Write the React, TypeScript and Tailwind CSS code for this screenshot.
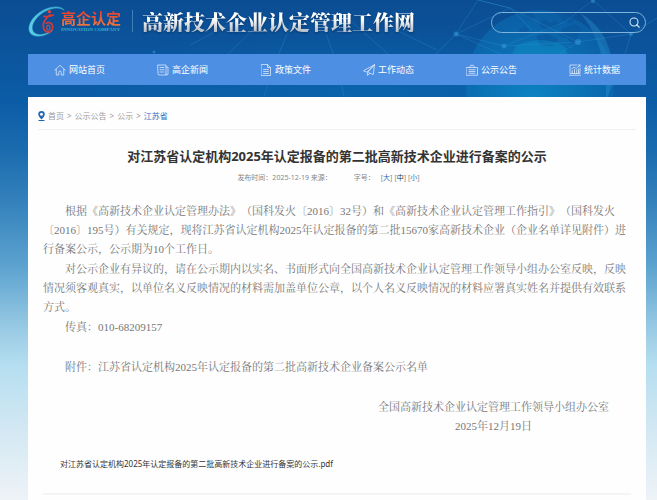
import type { ReactNode } from "react"

const Icon = ({ children }: { children: ReactNode }) => (
  <svg
    className="h-3 w-3 shrink-0 opacity-80"
    viewBox="0 0 24 24"
    fill="none"
    stroke="currentColor"
    strokeWidth="1.6"
    strokeLinecap="round"
    strokeLinejoin="round"
    aria-hidden="true"
  >
    {children}
  </svg>
)

const HomeIcon = () => (
  <Icon>
    <path d="M1.500 12.500 12 2.500l10.500 10M4.500 10.500V22h5v-5.500a2.500 2.500 0 0 1 5 0V22h5V10.500" />
  </Icon>
)

const NewsIcon = () => (
  <Icon>
    <path d="M2 2h16v20H4a2 2 0 0 1-2-2zM18 6h4v14a2 2 0 0 1-4 0M6 7h8M6 11.500h8M6 16h8" />
  </Icon>
)

const PolicyIcon = () => (
  <Icon>
    <path d="M3 1h12l6 6v16H3zM15 1v6h6M7 11h10M7 15h10M7 19h10" />
  </Icon>
)

const PlaneIcon = () => (
  <Icon>
    <path d="M23 1.500 1 13.500l6 2.500zM23 1.500 9 17v6l4-4M23 1.500 20.500 21 11 17.500" />
  </Icon>
)

const NoticeIcon = () => (
  <Icon>
    <path d="M1 7h22v15.500H1zM7 7l2.500-4.500h5L17 7M6 11.500h12M6 15h12M6 18.500h12" />
  </Icon>
)

const StatsIcon = () => (
  <Icon>
    <path d="M15 2H2v17h20V9M1 22.500h22M6.500 19v-6M11 19v-8M15.500 19v-7M19 19v-9M5.500 9.500l5-3 4 2.500L22 2M18 2h4v4" />
  </Icon>
)

const navItems = [
  { label: "网站首页", icon: <HomeIcon /> },
  { label: "高企新闻", icon: <NewsIcon /> },
  { label: "政策文件", icon: <PolicyIcon /> },
  { label: "工作动态", icon: <PlaneIcon /> },
  { label: "公示公告", icon: <NoticeIcon /> },
  { label: "统计数据", icon: <StatsIcon /> },
]

const crumbs = ["首页", "公示公告", "公示"]

const Backdrop = () => (
  <svg
    className="absolute inset-x-0 top-0 h-[100px] w-full"
    viewBox="0 0 657 100"
    preserveAspectRatio="xMidYMin slice"
    fill="none"
    aria-hidden="true"
  >
    <defs>
      <radialGradient id="globe" cx="0.45" cy="0.6" r="0.6">
        <stop offset="0" stopColor="#0c86c4" stopOpacity="0.9" />
        <stop offset="0.55" stopColor="#0b78ba" stopOpacity="0.75" />
        <stop offset="1" stopColor="#0b6ab0" stopOpacity="0.55" />
      </radialGradient>
      <radialGradient id="glow" cx="0.5" cy="0.9" r="0.6">
        <stop offset="0" stopColor="#0a6cb3" stopOpacity="0.5" />
        <stop offset="1" stopColor="#0a6cb3" stopOpacity="0" />
      </radialGradient>
    </defs>
    <rect x="80" width="577" height="100" fill="url(#glow)" />
    <circle cx="540" cy="84" r="74" fill="url(#globe)" />
    <path
      d="M580 13c24 14 34 36 33 69l-7 20c1-35-6-66-26-89z"
      fill="#2a9ad5"
      fillOpacity="0.35"
    />
    <g fill="#0a559b" fillOpacity="0.6">
      <path d="M523 15l8-3 5 5-6 3zM539 22l7-3 4 4 6-3 4 4-5 4-8 2-7-3zM552 12l16-1 9 6-7 6-8-2-3-6zM562 29l13-5 7 5-5 7 3 7-8 1-5-6-8-2zM536 36l12-2 10 5-5 8-13-2zM518 30l7-4 4 4-6 4z" />
    </g>
    <path d="M516 46c14-8 34-8 48 0l6 12h-60z" fill="#13a0cf" fillOpacity="0.3" />
    <g stroke="#2f9bdc" strokeOpacity="0.35" strokeWidth="0.8">
      <path d="M220 62l42-41M278 56l16-39M334 56l-12-34M389 55l-39-35M437 50l-51-25M190 45l42-22M263 100l14-45M345 100l-10-45" />
      <path d="M456 34L510 8l68 34 53-8-38-34M456 34l48 12 74-4M456 34l-20 20M456 34l45 20M478 0l32 8 22 22M578 42l-19 12M631 34l-6 20M631 34l26-16M593 0l-28 22-61 24M510 8L478 0l-22 34" />
    </g>
    <g fill="#3ba6e2" fillOpacity="0.45">
      <circle cx="456" cy="34" r="2.5" />
      <circle cx="578" cy="42" r="3" />
      <circle cx="504" cy="46" r="2.5" />
      <circle cx="631" cy="34" r="2" />
      <circle cx="593" cy="1" r="2" />
      <circle cx="154" cy="52" r="1.5" />
    </g>
  </svg>
)

const Logo = () => (
  <a href="#" className="flex items-center gap-1">
    <svg className="h-8 w-[37px] -mr-2" viewBox="0 0 111 96" fill="none" aria-hidden="true">
      <defs>
        <linearGradient id="ring" x1="0" y1="0" x2="1" y2="0">
          <stop offset="0" stopColor="#5fd0e6" />
          <stop offset="1" stopColor="#2ba5cf" />
        </linearGradient>
      </defs>
      <path
        d="M109 16C97-2 50 4 21 34-3 59-4 89 24 93c17 2 37-4 50-17-18 12-42 17-53 9C5 74 13 50 34 31 59 9 94 3 109 16z"
        fill="url(#ring)"
        stroke="#4cc3df"
        strokeWidth="1.5"
      />
      <circle cx="64" cy="20" r="5" fill="#e0443e" />
      <path
        d="M48 34c10 2 20 0 28-4M67 29C52 41 43 54 46 66c2 12 10 17 17 15 10-2 14-14 9-23-4-6-12-7-18-3"
        stroke="#d23a3c"
        strokeWidth="5"
        strokeLinecap="round"
      />
      <ellipse cx="61" cy="68" rx="5" ry="8" stroke="#e2514a" strokeWidth="3" />
    </svg>
    <span className="flex flex-col">
      <span className="bg-linear-to-b from-[#e8352f] to-[#f07a3c] bg-clip-text text-[15px] leading-[17px] font-bold text-transparent">
        高企认定
      </span>
      <span className="font-['Liberation_Serif',serif] text-[5px] leading-[6px] font-bold whitespace-nowrap text-[#3fb0cf]">
        INNOVATION COMPANY
      </span>
    </span>
  </a>
)

const Header = () => (
  <header className="flex h-[54px] items-start justify-between">
    <div className="flex items-center pt-[5px]">
      <Logo />
      <h1 className="ml-[11px] flex items-center border-l border-[#3f7fb8] pl-[9px] leading-[22px]">
        <span className="bg-linear-to-b from-white from-40% to-[#b4bcc6] bg-clip-text font-['Noto_Serif_CJK_SC','Noto_Sans_CJK_SC',serif] text-[21px] font-black whitespace-nowrap text-transparent drop-shadow-[0_1px_1px_#06386c]">
          高新技术企业认定管理工作网
        </span>
      </h1>
    </div>
    <form
      className="mt-3 flex h-[21px] w-[155px] items-center rounded-full border border-[#7fb3da] pr-[5px] pl-3"
      onSubmit={(e) => e.preventDefault()}
    >
      <input
        type="search"
        aria-label="搜索"
        className="w-full min-w-0 bg-transparent text-[9px] text-white outline-none"
      />
      <button type="submit" aria-label="搜索" className="text-[#d5e8f6]">
        <svg className="h-[11px] w-[11px]" viewBox="0 0 22 22" fill="none" stroke="currentColor" strokeWidth="2.2">
          <circle cx="10" cy="10" r="8" />
          <path d="m15.500 15.500 5 5" strokeLinecap="round" />
        </svg>
      </button>
    </form>
  </header>
)

const Nav = () => (
  <nav className="grid h-[31px] grid-cols-6 bg-[#4d8fe2] text-[9px] text-white">
    {navItems.map(({ label, icon }) => (
      <a key={label} href="#" className="flex items-center justify-center gap-[3px] whitespace-nowrap">
        {icon}
        {label}
      </a>
    ))}
  </nav>
)

const Breadcrumb = () => (
  <div className="mx-[-5px] flex h-[33px] items-center gap-[3px] border-b border-[#f0f0f0] pt-[5px] text-[8px] text-[#999]">
    <svg className="h-[10px] w-[7px]" viewBox="0 0 14 20" fill="#1c66b5" aria-hidden="true">
      <path d="M7 0a6.500 6.500 0 0 0-6.500 6.500C.5 10 4 14 7 17c3-3 6.500-7 6.500-10.500A6.500 6.500 0 0 0 7 0zm0 9.500a3 3 0 1 1 0-6 3 3 0 0 1 0 6z" />
      <path d="M1 18h12v2H1z" />
    </svg>
    {crumbs.map((crumb) => (
      <span key={crumb} className="flex gap-[3px]">
        <a href="#">{crumb}</a>
        <span>&gt;</span>
      </span>
    ))}
    <a href="#" className="text-[#2e6fc0]">
      江苏省
    </a>
  </div>
)

const Article = () => (
  <article>
    <h2 className="mt-4 text-center text-[13px] leading-5 font-bold text-[#333]">
      对江苏省认定机构2025年认定报备的第二批高新技术企业进行备案的公示
    </h2>
    <div className="mt-[6px] mr-[17px] flex justify-center gap-[22px] text-[7px] leading-3 text-[#888]">
      <span>发布时间：2025-12-19 来源：</span>
      <span className="flex gap-[2px]">
        <span className="mr-1">字号：</span>
        <button type="button">
          [<span className="text-[#2e6fc0]">大</span>]
        </button>
        <button type="button">
          [<span className="text-[#333]">中</span>]
        </button>
        <button type="button">
          [<span className="text-[#2e6fc0]">小</span>]
        </button>
      </span>
    </div>
    <div className="mt-[18px] flex flex-col gap-px font-['Liberation_Serif','Noto_Serif_CJK_SC','Noto_Sans_CJK_SC',serif] text-[11px] leading-[19px] text-[#777] [text-spacing-trim:space-all]">
      <p className="indent-[22px]">
        根据《高新技术企业认定管理办法》（国科发火〔2016〕32号）和《高新技术企业认定管理工作指引》（国科发火〔2016〕195号）有关规定，现将江苏省认定机构2025年认定报备的第二批15670家高新技术企业（企业名单详见附件）进行备案公示，公示期为10个工作日。
      </p>
      <p className="indent-[22px]">
        对公示企业有异议的，请在公示期内以实名、书面形式向全国高新技术企业认定管理工作领导小组办公室反映，反映情况须客观真实，以单位名义反映情况的材料需加盖单位公章，以个人名义反映情况的材料应署真实姓名并提供有效联系方式。
      </p>
      <p className="indent-[22px]">传真：010-68209157</p>
      <p className="mt-5 indent-[22px]">附件：江苏省认定机构2025年认定报备的第二批高新技术企业备案公示名单</p>
      <div className="mt-5 mr-[22px] self-end text-center">
        <p>全国高新技术企业认定管理工作领导小组办公室</p>
        <p>2025年12月19日</p>
      </div>
    </div>
    <a href="#" className="mt-[22px] ml-[17px] block text-[8px] leading-3 text-[#333]">
      对江苏省认定机构2025年认定报备的第二批高新技术企业进行备案的公示.pdf
    </a>
    <hr className="mt-[23px] border-t-2 border-[#f5f5f5]" />
  </article>
)

export default function App() {
  return (
    <div
      lang="zh-CN"
      className="relative flex min-h-screen flex-col bg-linear-[180deg,#0b4d93_0%,#0b5ca6_20%,#1a6bae_30%,#3380bb_40%,#5ba2cf_53%,#9acbe4_66%,#b5def0_73%,#d3e8f3_86%,#eef3f7_100%] pr-[11px] pl-7 font-['Noto_Sans','Noto_Sans_CJK_SC',sans-serif]"
    >
      <Backdrop />
      <div className="relative flex flex-1 flex-col">
        <Header />
        <Nav />
        <main className="mt-3 flex-1 bg-[#fefefe] pr-[15px] pl-[15px]">
          <Breadcrumb />
          <Article />
        </main>
      </div>
    </div>
  )
}
